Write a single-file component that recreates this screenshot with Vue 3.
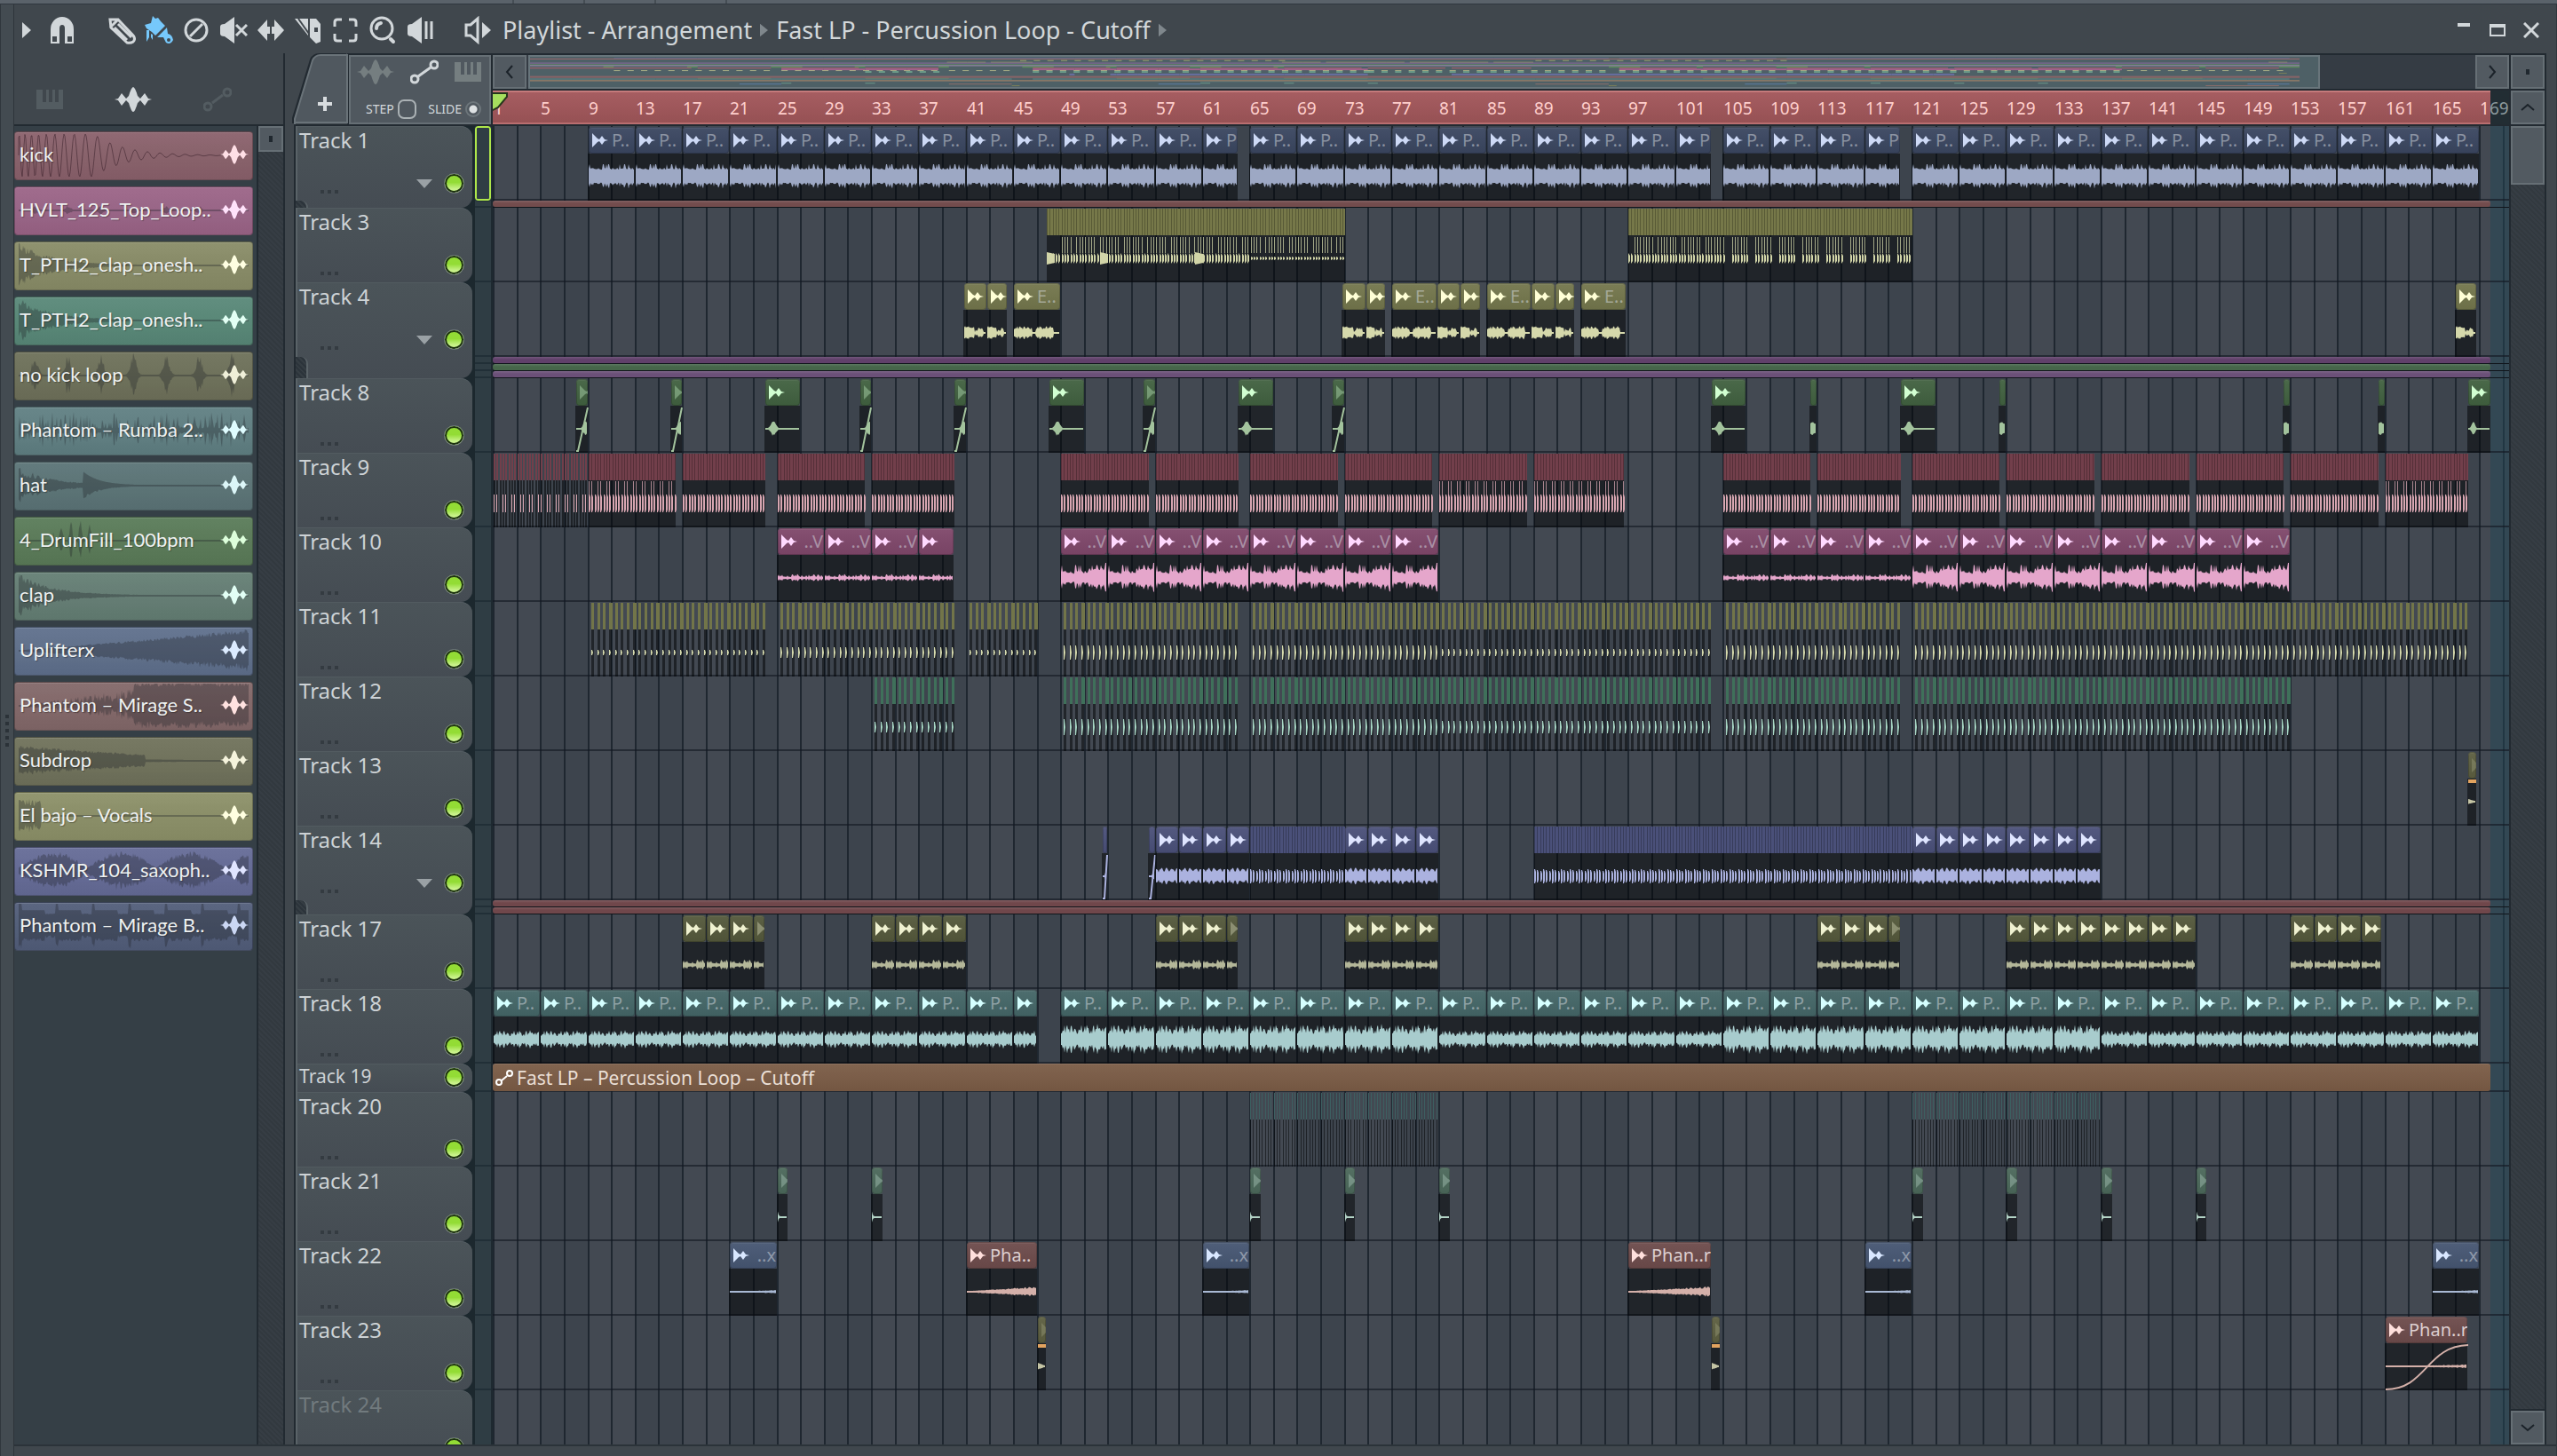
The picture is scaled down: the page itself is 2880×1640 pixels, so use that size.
<script setup>
const BAR = 13.316
const SONG = 2250
const px = (bar) => Math.round((bar - 1) * BAR) + 1

/* ---------- seeded noise and waveform outlines ---------- */
function noise(seed) {
  let a = seed * 2654435761
  return () => {
    a = (a + 0x6d2b79f5) | 0
    let t = Math.imul(a ^ (a >>> 15), 1 | a)
    t = (t + Math.imul(t ^ (t >>> 7), 61 | t)) ^ t
    return ((t ^ (t >>> 14)) >>> 0) / 4294967296
  }
}

const env = {
  drums: (t, r) => (r > 0.84 ? 1 : 0.54 + r * 0.22),
  small: (t, r) => 0.2 + Math.pow(r, 2) * 0.7,
  pulses: (t, r) => 0.4 + 0.4 * Math.abs(Math.cos(t * 12.5)) + r * 0.2,
  groove: (t, r) => 0.3 + 0.1 * Math.abs(Math.sin(t * 9.4)) + r * 0.6,
  swell: (t, r) => (t > 0.97 ? 1 : r > 0.85 ? 0.85 : t > 0.6 ? 0.45 + r * 0.25 : 0.25 + r * 0.3),
  voice: (t, r) => (t > 0.88 ? 0.04 : t > 0.48 && t < 0.54 ? 0.1 : t > 0.54 ? 0.25 + r * 0.5 : 0.6 + r * 0.4),
  voiceB: (t, r) => (t > 0.4 && t < 0.48 ? 0.12 : t > 0.88 ? 0.06 : 0.5 + r * 0.5),
  blob: (t, r) => 0.05 + Math.exp(-Math.pow((t - 0.24) / 0.1, 2)) * (0.8 + r * 0.2),
  tail: (t, r) => 0.06 + Math.exp(-Math.pow((t - 0.9) / 0.3, 2)) * (0.7 + r * 0.3),
  full: (t, r) => 0.7 + r * 0.3,
  rise: (t, r) => 0.12 + t * (0.5 + r * 0.4),
  decay: (t) => 0.06 + Math.exp(-t * 9),
  wedge: (t) => 1 - t * 0.8,
  burst: (t, r) => Math.exp(-t * 7) * (0.6 + 0.4 * r) + 0.02,
  taps: (t, r) => 0.04 + Math.pow(Math.abs(Math.sin(t * 22)), 14) * (0.4 + r * 0.6),
  dense: (t, r) => 0.1 + Math.pow(r, 3) * 0.8,
  twoHits: (t, r) => (t < 0.28 ? Math.exp(-t * 7) * (0.5 + 0.5 * r) : Math.exp(-(t - 0.28) * 14) * 0.7) + 0.02,
  fill: (t, r) => (t > 0.15 && t < 0.32 ? Math.pow(Math.abs(Math.sin(t * 76)), 4) * (0.5 + r * 0.5) : 0.03),
  grow: (t, r) => 0.03 + Math.pow(t, 1.1) * (0.75 + r * 0.25),
  mirage: (t, r) => (t > 0.5 ? 0.8 + r * 0.2 : t * (0.2 + r * 1.3)),
  sub: (t, r) => (t < 0.55 ? (1 - t * 1.1) * 0.65 * (0.75 + 0.25 * r) : 0.08 * (1 - t) + 0.02),
  short: (t, r) => (t < 0.1 ? 0.5 + r * 0.4 : 0.03),
  sax: (t, r) => 0.15 + Math.abs(Math.sin(t * 10.5)) * (0.45 + r * 0.35),
  bass: (t, r) => (t * 6.3 % 1 < 0.08 ? 1 : t * 6.3 % 1 < 0.72 ? 0.68 : 0.5 + r * 0.04)
}

function wave(x0, x1, cy, amp, kind, seed = 3, step = 2) {
  const rnd = noise(seed)
  const top = []
  const low = []
  for (let x = x0; x <= x1; x += step) {
    const t = (x - x0) / Math.max(1, x1 - x0)
    const a = env[kind](t, rnd()) * amp
    top.push(`${x} ${(cy - Math.max(1, a)).toFixed(1)}`)
    low.unshift(`${x} ${(cy + Math.max(1, a * (0.75 + rnd() * 0.25))).toFixed(1)}`)
  }
  return `M${top.join('L')}L${low.join('L')}Z`
}

function kickPath() {
  let phase = 0
  let d = 'M3 25'
  for (let x = 3; x < 262; x++) {
    phase += (2 * Math.PI) / (6 + Math.min(x, 90) * 0.09)
    const a = x < 88 ? 24 : 24 * Math.exp(-(x - 88) / 34)
    d += `L${x} ${(25 - Math.sin(phase) * a).toFixed(1)}`
  }
  return d
}

/* ---------- clip source picker ---------- */
const sources = [
  ['kick', '#8a616b', '#ffdfe6', 'kick'],
  ['HVLT_125_Top_Loop..', '#9b6487', '#ffe2fb', 'taps', 5],
  ['T_PTH2_clap_onesh..', '#898c67', '#ffffe2', 'burst', 26],
  ['T_PTH2_clap_onesh..', '#588878', '#e2fff4', 'burst', 26],
  ['no kick loop', '#6e715a', '#efefd8', 'taps', 25],
  ['Phantom – Rumba 2..', '#608083', '#dffcff', 'dense', 24],
  ['hat', '#5b7477', '#dcf6f8', 'twoHits', 22],
  ['4_DrumFill_100bpm', '#5a7b58', '#ddffdb', 'fill', 24],
  ['clap', '#647e74', '#e2fff5', 'burst', 26],
  ['Uplifterx', '#5f708c', '#dcebff', 'grow', 24],
  ['Phantom – Mirage S..', '#836869', '#ffe2e0', 'mirage', 27],
  ['Subdrop', '#70725b', '#f5f3dc', 'sub', 27],
  ['El bajo – Vocals', '#8c9068', '#ffffe0', 'short', 22],
  ['KSHMR_104_saxoph..', '#656b97', '#e0e4ff', 'sax', 24],
  ['Phantom – Mirage B..', '#525e7a', '#cbd7f4', 'bass', 26]
].map(([name, color, ink, kind, amp], i) => ({
  name, color, ink, kick: kind === 'kick',
  d: kind === 'kick' ? kickPath() : wave(3, 262, 25, amp, kind, i + 2, 1)
}))

/* ---------- arrangement ---------- */
const run = (s, e, len, extra = {}) => {
  const out = []
  for (let b = s; b < e; b += len) out.push({ s: b, e: Math.min(b + len, e), ...extra })
  return out
}
const c = (s, e, extra = {}) => ({ s, e, ...extra })
const brown = { bright: true, head: '#6d4b4b', wave: '#d4b0a9', ink: '#ffdfdc' }

const tracks = [
  { n: 1, head: '#3a4660', ink: '#cdd9f5', wave: '#9da8c4', mini: '#56698c', fold: ['#734c4d'],
    clips: [...run(9, 64, 4), ...run(65, 104, 4), ...run(105, 120, 4), ...run(121, 169, 4)]
      .map((k) => ({ ...k, label: k.e - k.s === 4 ? 'P..' : 'P', kind: 'drums', amp: 14 })) },
  { n: 3, head: '#767849', wave: '#d2d5a8', mini: '#9da06c',
    runs: [{ s: 47.8, e: 73, kind: 'claps' }, { s: 97, e: 121, kind: 'claps', sparse: true }] },
  { n: 4, head: '#73764c', ink: '#ffffd6', wave: '#d5d8ab', mini: '#8f9263', fold: ['#60406a', '#46664a', '#6b5078'],
    clips: [
      c(40.8, 42.75), c(42.75, 44.5), c(45, 49, { label: 'E..' }), c(72.8, 74.8), c(74.8, 76.5),
      c(77, 80.8, { label: 'E..' }), c(80.8, 82.8), c(82.8, 84.5), c(85, 88.8, { label: 'E..' }),
      c(88.8, 90.8), c(90.8, 92.5), c(93, 96.8, { label: 'E..' }), c(167, 168.8)
    ].map((k) => ({ kind: k.label ? 'voiceB' : 'voice', amp: 8, ...k })) },
  { n: 8, head: '#416140', ink: '#d2ffd2', wave: '#a3c39d', mini: '#5b8a5c',
    clips: [
      ...[8, 16, 32, 40, 56, 72].map((s) => c(s, s + 1, { kind: 'tail', amp: 9, fade: true })),
      ...[24, 48, 64, 104, 120].map((s) => c(s, s + 3, { kind: 'blob', amp: 9 })),
      ...[112.4, 128.4, 152.4, 160.4].map((s) => c(s, s + 0.6, { kind: 'full', amp: 8 })),
      c(168, 170, { kind: 'blob', amp: 9 })
    ] },
  { n: 9, head: '#723f4b', wave: '#d8a6b1', mini: '#b5616f',
    runs: [
      { s: 1, e: 9, kind: 'thin' }, { s: 9, e: 16.4, kind: 'tall' }, { s: 17, e: 24 }, { s: 25, e: 32.4 }, { s: 33, e: 40 },
      { s: 49, e: 56.4 }, { s: 57, e: 64 }, { s: 65, e: 72.4 }, { s: 73, e: 80.4 }, { s: 81, e: 88.4, kind: 'tall' }, { s: 89, e: 96.6, kind: 'tall' },
      { s: 105, e: 112.4 }, { s: 113, e: 120 }, { s: 121, e: 128.4 }, { s: 129, e: 136.4 }, { s: 137, e: 144.4 }, { s: 145, e: 152.4 },
      { s: 153, e: 160.4 }, { s: 161, e: 168, kind: 'tall' }
    ].map((r) => ({ kind: 'kick', ...r })) },
  { n: 10, head: '#7f476a', ink: '#ffd9ff', wave: '#e5a6cb', mini: '#a3618c',
    clips: [
      ...run(25, 40, 4, { kind: 'small', amp: 5 }), ...run(49, 81, 4, { kind: 'swell', amp: 17 }),
      ...run(105, 121, 4, { kind: 'small', amp: 5 }), ...run(121, 153, 4, { kind: 'swell', amp: 17 })
    ].map((k) => ({ ...k, label: k.e - k.s === 4 ? '..V' : '', end: true })) },
  { n: 11, head: '#727549', wave: '#d7dbae', mini: '#b0b588',
    runs: [
      { s: 9, e: 24, a: 3 }, { s: 25, e: 40, a: 6 }, { s: 41, e: 47, a: 3 }, { s: 49, e: 64, a: 8 }, { s: 65, e: 81, a: 8 },
      { s: 81, e: 104, a: 4 }, { s: 105, e: 120, a: 8 }, { s: 121, e: 168, a: 8 }
    ].map((r) => ({ kind: 'hits', ...r })) },
  { n: 12, head: '#3f705a', wave: '#a9d8c6', mini: '#6c9c8a',
    runs: [
      { s: 33, e: 40, a: 6 }, { s: 49, e: 64, a: 9 }, { s: 65, e: 81, a: 9 }, { s: 81, e: 104, a: 7 },
      { s: 105, e: 120, a: 9 }, { s: 121, e: 153, a: 9 }
    ].map((r) => ({ kind: 'hits', ...r })) },
  { n: 13, head: '#5c5e40', ink: '#a5a884', wave: '#c4c4a4', mini: '#7d8058', clips: [c(168, 168.75, { kind: 'wedge', amp: 3, spark: true })] },
  { n: 14, head: '#4a5079', ink: '#dfe5ff', wave: '#abb2df', mini: '#676fa3', fold: ['#70474b', '#70474b'],
    clips: [
      c(52.5, 53, { kind: 'tail', amp: 5, fade: true }), c(56.4, 57, { kind: 'tail', amp: 5, fade: true }),
      ...run(57, 65, 2), ...run(73, 81, 2), ...run(121, 137, 2)
    ].map((k) => ({ kind: 'pulses', amp: 10, ...k })),
    runs: [{ s: 65, e: 73, kind: 'pulse' }, { s: 89, e: 121, kind: 'pulse' }] },
  { n: 17, head: '#54583b', ink: '#eff1d0', wave: '#b4b799', mini: '#7b8050',
    clips: [
      ...run(17, 24, 2), ...run(33, 41, 2), ...run(57, 64, 2), ...run(73, 81, 2), ...run(113, 120, 2),
      ...run(129, 145, 2), ...run(153, 160.7, 2)
    ].map((k) => ({ ...k, kind: 'small', amp: 7 })) },
  { n: 18, head: '#446667', ink: '#d5ffff', wave: '#a8cccd', mini: '#5f8a8c',
    clips: [...run(1, 47, 4), ...run(49, 169, 4)].map((k) => {
      const loud = (k.s >= 49 && k.s < 81) || (k.s >= 105 && k.s < 137)
      return { ...k, label: k.e - k.s === 4 ? 'P..' : '', kind: 'groove', amp: loud ? 18 : 11 }
    }) },
  { n: 19, head: '#7b5c46', auto: 'Fast LP – Percussion Loop – Cutoff' },
  { n: 20, head: '#3d5f61', wave: '#3d5f61', mini: '#527578', runs: [{ s: 65, e: 81, kind: 'ticks' }, { s: 121, e: 137, kind: 'ticks' }] },
  { n: 21, head: '#4b685a', ink: '#c0ddd0', wave: '#b3d3c6', mini: '#6c9c8a',
    clips: [25, 33, 65, 73, 81, 121, 129, 137, 145].map((s) => c(s, s + 0.95, { kind: 'decay', amp: 6 })) },
  { n: 22, head: '#465672', ink: '#d9e7ff', wave: '#a9b9d4', mini: '#5d7fa6',
    clips: [
      ...[21, 61, 117, 165].map((s) => c(s, s + 4, { kind: 'rise', amp: 2, label: '..x', end: true })),
      c(41, 47, { kind: 'rise', amp: 6, label: 'Pha..', ...brown }),
      c(97, 104, { kind: 'rise', amp: 6, label: 'Phan..r', ...brown })
    ] },
  { n: 23, head: '#5c5e40', ink: '#a5a884', wave: '#c4c4a4', mini: '#7d8058',
    clips: [
      c(47, 47.75, { kind: 'wedge', amp: 4, spark: true }), c(104, 104.75, { kind: 'wedge', amp: 4, spark: true }),
      c(161, 168, { kind: 'rise', amp: 2, label: 'Phan..r', curve: true, ...brown })
    ] },
  { n: 24, dim: true }
]

const CY = 57
for (const t of tracks) {
  t.clips = (t.clips || []).map((k) => {
    const x = px(k.s)
    const w = px(k.e) - x
    return { ...k, x, w, d: wave(x, x + w - 2, CY, k.amp, k.kind, 11 + k.kind.length, 1) }
  })
  t.shapes = (t.runs || []).map((r) => {
    const x0 = px(r.s)
    const x1 = px(r.e)
    const o = { x: x0, w: x1 - x0, head: '', body: '', wave: '', shade: '', whisk: '', solid: r.kind !== 'thin' && r.kind !== 'hits' && r.kind !== 'ticks' }
    const pitch = r.kind === 'hits' ? BAR / 2 : BAR / 4
    const off = r.kind === 'hits' ? 3 : 0
    let i = 0
    for (let p = x0 + off; p < x1 - 1; p += pitch, i++) {
      const x = Math.round(p)
      if (r.kind === 'hits') {
        const w = i % 4 === 3 ? 4 : 3
        o.head += `M${x} 1h${w}v30h${-w}z`
        o.body += `M${x} 31h3v53h-3z`
        o.wave += `M${x} ${CY - r.a}h1l1 ${r.a}l-1 ${r.a}h-1z`
      } else if (r.kind === 'ticks') {
        o.head += `M${x} 1h1v30h-1z`
        o.body += `M${x} 31h1v53h-1z`
      } else if (r.kind === 'thin') {
        o.head += `M${x} 1h2v30h-2z`
        o.body += `M${x} 31h2v53h-2z`
        if (i % 3 !== 2) o.wave += `M${x} 47h1v20h-1z`
      } else if (r.kind === 'claps') {
        o.shade += `M${x} 1h1v30h-1z`
        const local = (p - x0) / BAR
        const gap = r.sparse && local > 8 ? local % 2 < 0.5 : false
        const a = !r.sparse && local > 17 ? 2 : 6
        if (!gap) {
          o.wave += `M${x} ${CY - a}l2 ${a / 2}v${a}l-2 ${a / 2}z`
          if (local % 2 > 0.3 && (local > 1 || r.sparse)) o.whisk += `M${x} 33h1v18h-1z`
        }
      } else {
        o.shade += `M${x} 1h1v30h-1z`
        const a = r.kind === 'pulse' ? 8 - (i % 3) : 10
        o.wave += `M${x} ${CY - a}h1l1 3v${2 * a - 6}l-1 3h-1z`
        if (r.kind === 'tall' && i % 3 !== 2) o.whisk += `M${x} 32h1v20h-1z`
      }
    }
    if (r.kind === 'claps' && !r.sparse) {
      for (const b of [47.8, 52.3, 60.3]) {
        const x = px(b)
        o.wave += `M${x} ${CY - 7}l9 2v10l-9 2z`
      }
    }
    return o
  })
}

const laneH = (t) => (t.auto ? 32 : 84)
const rowH = (t) => laneH(t) + (t.fold ? t.fold.length * 8 : 0)

const gridLines = Array.from({ length: 87 }, (_, i) => px(1 + i * 2))
const shades = Array.from({ length: 22 }, (_, i) => ({ x: px(1 + i * 8), w: px(5) - 1 }))
const labels = Array.from({ length: 43 }, (_, i) => {
  const n = 1 + i * 4
  return { n, w: px(n + 4) - px(n) }
})

/* ---------- overview ---------- */
const overview = []
{
  const rows = { 1: [1, 1], 3: [4, 1], 4: [6, 1], 8: [11, 2], 9: [13, 1], 10: [14, 2], 11: [16, 1], 12: [17, 2], 13: [19, 1], 14: [20, 2], 17: [25, 1], 18: [26, 1], 20: [29, 1], 21: [31, 1], 22: [32, 1], 23: [34, 1] }
  for (const t of tracks) {
    const r = rows[t.n]
    if (!r) continue
    for (const k of t.clips) overview.push({ x: k.s - 1, w: k.e - k.s, y: r[0], h: r[1], f: k.curve || k.bright ? '#8f6f6c' : t.mini })
    for (const k of t.runs || []) {
      const dash = t.n === 11 || t.n === 12 || t.n === 3
      if (dash) for (let b = k.s; b < k.e; b += 1.3) overview.push({ x: b - 1, w: 0.6, y: r[0], h: r[1], f: t.mini })
      else overview.push({ x: k.s - 1, w: k.e - k.s, y: r[0], h: r[1], f: t.mini })
    }
  }
  for (const [y, f] of [[2, '#a0686b'], [7, '#8c6ba0'], [9, '#5e8c5e'], [10, '#a58ab8'], [23, '#a0686b'], [24, '#8f6468'], [28, '#b58a68']]) {
    overview.push({ x: 0, w: 169, y, h: 1, f })
  }
}
</script>

<template>
  <div class="app">
    <div class="topstrip"><i></i><i></i><i></i><i></i></div>
    <div class="window">
      <div class="gutter"><i v-for="n in 5" :key="n"></i></div>
      <div class="content">
        <header class="toolbar">
          <button class="tool caret" aria-label="Menu"><svg viewBox="0 0 10 18"><path d="M0 0L10 9L0 18z" /></svg></button>
          <button class="tool magnet" aria-label="Snap">
            <svg viewBox="0 0 32 32"><path fill-rule="evenodd" d="M3 31V15a13 14 0 0 1 26 0v16h-10V14a3 4 0 0 0-6 0v17zM5 23v6h5v-6zM22 23v6h5v-6z" /></svg>
          </button>
          <button class="tool" aria-label="Draw">
            <svg viewBox="0 0 32 32" class="line"><path d="M3 4H12L29 22Q32 26 29 29Q26 31 22 30L4 13zM3 13L12 4M8 13L22 27M12 9L27 24" /></svg>
          </button>
          <button class="tool blue" aria-label="Paint">
            <svg viewBox="0 0 32 32"><path d="M9 0L12 3L15 2L18 6L23 11L12 22L8 18L2 14L0 10L7 8zM2 16h3v8l-3 5zM7 20l2 1v6l-2-3z" /><path d="M14 24L25 13L26 20Q31 21 32 27Q29 33 24 30L21 24z" /><circle cx="27" cy="27" r="2" fill="#40474d" /></svg>
          </button>
          <button class="tool" aria-label="Delete"><svg viewBox="0 0 32 32" class="line"><circle cx="16" cy="16" r="12" /><path d="M9 23L23 9" /></svg></button>
          <button class="tool" aria-label="Mute"><svg viewBox="0 0 32 32"><path d="M1 12Q1 9 6 9L17 1v30L6 23Q1 23 1 20z" /><path d="M19 10L31 22M31 10L19 22" class="stroke" /></svg></button>
          <button class="tool" aria-label="Slip"><svg viewBox="0 0 32 32"><path d="M1 16L12 4v8h3v8h-3v8zM31 16L20 4v8h-3v8h3v8z" /></svg></button>
          <button class="tool" aria-label="Slice"><svg viewBox="0 0 32 32"><path fill-rule="evenodd" d="M1 3h15v19zM18 3h7l5 6v20l-5 2-7-7zM23 13v5h4v-5z" /><path d="M5 3L17 20" stroke="#40474d" stroke-width="2" /></svg></button>
          <button class="tool" aria-label="Select"><svg viewBox="0 0 32 32" class="line"><path d="M4 12V7Q4 4 7 4H12M20 4h5Q28 4 28 7v5M28 20v5Q28 28 25 28h-5M12 28H7Q4 28 4 25V20" /></svg></button>
          <button class="tool" aria-label="Zoom"><svg viewBox="0 0 32 32" class="line"><circle cx="15" cy="14" r="12" /><path d="M9 14Q9 9 14 8" class="stroke wide" /><path d="M25 26L28 29" class="stroke wide" /></svg></button>
          <button class="tool" aria-label="Preview"><svg viewBox="0 0 32 32"><path d="M2 12Q2 9 7 9L18 1v30L7 23Q2 23 2 20z" /><path d="M23 6v20M29 6v20" class="stroke" /></svg></button>
          <button class="tool speaker" aria-label="Playlist options"><svg viewBox="0 0 32 32"><path d="M3 10h5L16 3v26L8 22H3z" class="hollow" /><path d="M21 7L31 16L21 25z" /></svg></button>
          <nav class="crumbs">
            <a href="#playlist">Playlist - Arrangement</a>
            <svg viewBox="0 0 10 16"><path d="M0 0L10 8L0 16z" /></svg>
            <a href="#clip">Fast LP - Percussion Loop - Cutoff</a>
            <svg viewBox="0 0 10 16"><path d="M0 0L10 8L0 16z" /></svg>
          </nav>
          <div class="winbtns">
            <button aria-label="Minimize"><svg viewBox="0 0 18 18"><path d="M2 1h14v4H2z" /></svg></button>
            <button aria-label="Maximize"><svg viewBox="0 0 18 18"><path fill-rule="evenodd" d="M0 2h18v14H0zM2 6v8h14V6z" /></svg></button>
            <button aria-label="Close"><svg viewBox="0 0 18 18"><path d="M1 1L17 17M17 1L1 17" class="stroke" /></svg></button>
          </div>
        </header>

        <div class="main">
          <aside class="picker">
            <div class="filters">
              <button class="off" aria-label="Patterns"><svg viewBox="0 0 30 22"><path d="M0 0h7v14h4V0h3v14h4V0h3v14h4V0h5v22H0z" /></svg></button>
              <button aria-label="Audio clips"><svg viewBox="0 0 42 28"><path d="M0 14L4 13L8 7L13 13L16 10Q19 0 21 0Q23 0 26 10L29 13L34 7L38 13L42 14L38 15L34 21L29 15L26 18Q23 28 21 28Q19 28 16 18L13 15L8 21L4 15z" /></svg></button>
              <button class="off" aria-label="Automation"><svg viewBox="0 0 32 28" class="line"><circle cx="5" cy="22" r="4" /><circle cx="27" cy="6" r="4" /><path d="M10 18L22 9" /></svg></button>
            </div>
            <div class="sources">
              <div class="list">
                <button v-for="(s, i) in sources" :key="i" class="source" :style="{ backgroundColor: s.color }">
                  <svg class="shape" :class="{ trace: s.kick }" viewBox="0 0 265 50" preserveAspectRatio="none"><path :d="s.d" /></svg>
                  <span>{{ s.name }}</span>
                  <svg class="mark" viewBox="0 0 42 28"><path :fill="s.ink" d="M0 14L4 13L8 7L13 13L16 10Q19 0 21 0Q23 0 26 10L29 13L34 7L38 13L42 14L38 15L34 21L29 15L26 18Q23 28 21 28Q19 28 16 18L13 15L8 21L4 15z" /></svg>
                </button>
              </div>
              <div class="pscroll"><button aria-label="Scroll"><i></i></button></div>
            </div>
          </aside>

          <section class="arrangement">
            <div class="top">
              <div class="tabs">
                <button class="add" aria-label="Add track">
                  <svg viewBox="0 0 62 80"><path d="M1 80V74L21 8Q24 2 30 2H60V78H2" /><path class="plus" d="M27 55h6v-6h4v6h6v4h-6v6h-4v-6h-6z" /></svg>
                </button>
                <div class="modes">
                  <div class="modeicons">
                    <svg viewBox="0 0 42 28" class="dimicon wide42"><path d="M0 14L4 13L8 7L13 13L16 10Q19 0 21 0Q23 0 26 10L29 13L34 7L38 13L42 14L38 15L34 21L29 15L26 18Q23 28 21 28Q19 28 16 18L13 15L8 21L4 15z" /></svg>
                    <svg viewBox="0 0 32 28" class="line wide32"><circle cx="5" cy="22" r="4" /><circle cx="27" cy="6" r="4" /><path d="M9 19L23 9" /></svg>
                    <svg viewBox="0 0 30 22" class="dimicon wide30"><path d="M0 0h7v14h4V0h3v14h4V0h3v14h4V0h5v22H0z" /></svg>
                  </div>
                  <div class="switches">
                    <label>STEP<input type="checkbox" /></label>
                    <label>SLIDE<input type="radio" checked /></label>
                  </div>
                </div>
              </div>
              <div class="rulers">
                <div class="mini">
                  <button class="arrow" aria-label="Scroll left"><svg viewBox="0 0 12 18"><path d="M9 2L3 9L9 16" /></svg></button>
                  <div class="track">
                    <div class="view">
                      <svg viewBox="0 0 169 36" preserveAspectRatio="none">
                        <rect v-for="(r, i) in overview" :key="i" :x="r.x" :y="r.y" :width="r.w" :height="r.h" :fill="r.f" />
                      </svg>
                    </div>
                  </div>
                  <button class="arrow" aria-label="Scroll right"><svg viewBox="0 0 12 18"><path d="M3 2L9 9L3 16" /></svg></button>
                </div>
                <div class="ruler">
                  <div class="red" :style="{ width: SONG + 'px' }"></div>
                  <div class="numbers">
                    <span v-for="l in labels" :key="l.n" :style="{ width: l.w + 'px' }"><template v-if="l.n === 169">1<i>69</i></template><template v-else>{{ l.n }}</template></span>
                  </div>
                  <svg class="marker" viewBox="0 0 18 22"><path d="M-2 1H16V5L6 17L-2 21z" /></svg>
                </div>
              </div>
            </div>

            <div class="body">
              <div class="heads">
                <div v-for="t in tracks" :key="t.n" class="headrow" :class="{ slim: t.auto, dim: t.dim }" :style="{ height: rowH(t) + 'px' }">
                  <span class="name">Track {{ t.n }}</span>
                  <span v-if="!t.auto && !t.dim" class="dots"><i></i><i></i><i></i></span>
                  <svg v-if="t.fold" class="tri" viewBox="0 0 18 10"><path d="M0 0H18L9 10z" /></svg>
                  <button class="led" :aria-label="'Mute track ' + t.n"></button>
                  <span v-if="t.fold" class="notch" :style="{ height: t.fold.length * 8 + 'px' }"></span>
                </div>
              </div>
              <div class="strip">
                <template v-for="t in tracks" :key="t.n">
                  <div class="cell" :class="{ sel: t.n === 1 }" :style="{ height: laneH(t) + 'px' }"></div>
                  <div v-for="(f, i) in t.fold || []" :key="i" class="cell thin"></div>
                </template>
              </div>
              <div class="timeline">
                <svg class="grid" width="2400" height="1500">
                  <rect v-for="(s, i) in shades" :key="'s' + i" :x="s.x" y="0" :width="s.w" height="1500" fill="#434952" />
                  <rect v-for="g in gridLines" :key="g" :x="g - 1" y="0" width="2" height="1500" fill="#1f2730" />
                </svg>
                <div class="beyond" :style="{ left: SONG + 'px' }"></div>
                <template v-for="t in tracks" :key="t.n">
                  <div class="lane" :style="{ height: laneH(t) + 'px' }">
                    <div v-if="t.auto" class="autoclip" :style="{ width: SONG + 'px', backgroundColor: t.head }">
                      <svg viewBox="0 0 22 20"><circle cx="5" cy="15" r="3" /><circle cx="17" cy="5" r="3" /><path d="M8 13L14 8" /></svg>
                      <span>{{ t.auto }}</span>
                    </div>
                    <svg v-else class="shapes" width="2260" height="84">
                      <g v-for="(r, i) in t.shapes" :key="'r' + i">
                        <rect v-if="r.solid" :x="r.x" y="31" :width="r.w" height="53" class="dark" />
                        <rect v-if="r.solid" :x="r.x" y="1" :width="r.w" height="30" :fill="t.head" />
                        <path :d="r.shade" fill="#000" opacity="0.25" />
                        <path :d="r.body" class="dark" />
                        <path :d="r.head" :fill="t.head" />
                        <path :d="r.whisk" :fill="t.wave" opacity="0.75" />
                        <path :d="r.wave" :fill="t.wave" />
                      </g>
                      <g v-for="(k, i) in t.clips" :key="'c' + i">
                        <rect :x="k.x - 1" y="31" :width="k.w" height="53" class="dark" />
                        <path :d="k.d" :fill="k.wave || t.wave" />
                        <path v-if="k.fade" :d="`M${k.x} 82h2L${k.x + k.w - 1} 33`" fill="none" :stroke="t.wave" stroke-width="2" />
                        <path v-if="k.curve" :d="`M${k.x} 83C${k.x + 46} 83 ${k.x + 46} 34 ${k.x + k.w} 33`" fill="none" :stroke="k.wave" stroke-width="2" />
                        <rect v-if="k.spark" :x="k.x" y="32" width="9" height="4" fill="#e2a35f" />
                      </g>
                    </svg>
                    <div v-for="(k, i) in t.clips" :key="'h' + i" class="clip" :class="{ faint: k.w < 18, end: k.end, bright: k.bright }"
                      :style="{ left: k.x + 'px', width: k.w - 1 + 'px', backgroundColor: k.head || t.head }">
                      <svg v-if="k.w > 9" viewBox="0 0 18 16"><path :fill="k.ink || t.ink" d="M0 0L6 6L8 7L11 3L14 7L18 8L14 9L11 13L8 9L6 10L0 16z" /></svg>
                      <span v-if="k.label">{{ k.label }}</span>
                    </div>
                  </div>
                  <div v-for="(f, i) in t.fold || []" :key="t.n + '-' + i" class="foldbar">
                    <div :style="{ width: SONG + 'px', backgroundColor: f }"></div>
                  </div>
                </template>
              </div>
            </div>
          </section>

          <div class="vscroll">
            <button class="sq corner" aria-label="Zoom"><i></i></button>
            <button class="sq" aria-label="Scroll up"><svg viewBox="0 0 18 12"><path d="M2 9L9 3L16 9" /></svg></button>
            <div class="rail"><div class="thumb"></div></div>
            <button class="sq" aria-label="Scroll down"><svg viewBox="0 0 18 12"><path d="M2 3L9 9L16 3" /></svg></button>
          </div>
        </div>
        <footer class="foot"></footer>
      </div>
    </div>
  </div>
</template>

<style>
body {
  margin: 0;
  background: #40474d;
}
</style>

<style scoped>
* {
  box-sizing: border-box;
}
.app {
  height: 100vh;
  display: flex;
  flex-direction: column;
  overflow: hidden;
  background: #40474d;
  color: #d2d7da;
  font-family: "Noto Sans", "Open Sans", sans-serif;
}
button {
  padding: 0;
  border: 0;
  background: none;
  color: inherit;
  font: inherit;
}
svg {
  display: block;
  fill: currentColor;
}
.topstrip {
  display: flex;
  flex: none;
  height: 5px;
  padding-left: 577px;
  gap: 78px;
  background: #5a626a;
  border-bottom: 1px solid #30373e;
}
.topstrip i {
  width: 2px;
  background: #454d54;
}
.window {
  display: flex;
  flex: 1;
  min-height: 0;
}
.gutter {
  flex: none;
  width: 16px;
  display: flex;
  flex-direction: column;
  align-items: center;
  justify-content: center;
  gap: 4px;
  background: #434b51;
  border-left: 1px solid #30373d;
  border-right: 1px solid #2e353b;
}
.gutter i {
  width: 4px;
  height: 4px;
  background: #2b3238;
}
.content {
  display: flex;
  flex-direction: column;
  flex: 1;
  min-width: 0;
  border-right: 1px solid #30373d;
}

/* toolbar */
.toolbar {
  display: flex;
  align-items: center;
  flex: none;
  height: 55px;
  padding: 2px 19px 0 8px;
}
.tool {
  display: flex;
  justify-content: center;
  width: 42px;
  flex: none;
}
.tool svg {
  width: 32px;
  height: 32px;
}
.caret {
  width: 12px;
}
.caret svg {
  width: 10px;
  height: 18px;
}
.magnet {
  width: 68px;
  margin-right: 12px;
}
.speaker {
  margin-left: 23px;
}
.blue {
  color: #76c8fb;
}
.line,
.line .stroke,
.stroke,
.hollow {
  fill: none;
  stroke: currentColor;
  stroke-width: 3;
}
.line .wide {
  stroke-width: 4;
  stroke-linecap: round;
}
.crumbs {
  display: flex;
  align-items: center;
  gap: 9px;
  margin-left: 7px;
  font-size: 27px;
  line-height: 32px;
}
.crumbs a {
  color: #d2d7da;
  text-decoration: none;
}
.crumbs svg {
  width: 9px;
  height: 16px;
  color: #7f878c;
}
.winbtns {
  display: flex;
  gap: 20px;
  margin-left: auto;
}
.winbtns svg {
  width: 18px;
  height: 18px;
}

/* clip source picker */
.main {
  display: flex;
  flex: 1;
  min-height: 0;
}
.picker {
  display: flex;
  flex-direction: column;
  flex: none;
  width: 305px;
  border-right: 2px solid #222a31;
}
.filters {
  display: flex;
  align-items: center;
  flex: none;
  height: 80px;
  padding: 24px 58px 0 25px;
  justify-content: space-between;
}
.filters svg {
  width: 42px;
  height: 28px;
}
.filters .off {
  color: #535c61;
}
.filters .off:first-child svg {
  width: 30px;
  height: 22px;
}
.filters .off:last-child svg {
  width: 32px;
}
.sources {
  display: flex;
  flex: 1;
  min-height: 0;
  border-top: 2px solid #222a31;
}
.list {
  display: flex;
  flex-direction: column;
  flex: 1;
  gap: 7px;
  padding: 6px 4px 0 0;
  background: #353f46;
}
.source {
  position: relative;
  display: flex;
  align-items: center;
  flex: none;
  height: 55px;
  padding: 0 4px 3px 5px;
  border: 1px solid rgba(0, 0, 0, 0.25);
  border-radius: 4px;
  background-image: linear-gradient(rgba(255, 255, 255, 0.05), rgba(0, 0, 0, 0.06));
  box-shadow: inset 0 1px rgba(255, 255, 255, 0.12);
  text-align: left;
}
.source span {
  position: relative;
  flex: 1;
  color: #eef1f1;
  font-family: Lato, "Noto Sans", sans-serif;
  font-size: 22px;
  line-height: 28px;
  white-space: nowrap;
  text-shadow: 1px 1px 1px rgba(0, 0, 0, 0.3);
}
.source .shape {
  position: absolute;
  inset: 1px 1px;
  width: 265px;
  height: 50px;
  fill: rgba(30, 32, 38, 0.33);
}
.source .trace {
  fill: none;
  stroke: rgba(50, 25, 35, 0.5);
  stroke-width: 1;
}
.source .mark {
  position: relative;
  flex: none;
  width: 32px;
  height: 24px;
}
.pscroll,
.rail {
  background: #363d44 repeating-linear-gradient(45deg, #363d44 0 2px, #32393f 2px 4px);
}
.pscroll {
  width: 30px;
  border-left: 2px solid #222a31;
}
.pscroll button {
  display: flex;
  align-items: center;
  justify-content: center;
  width: 28px;
  height: 29px;
  background: #525a61;
  border: 2px solid #666f75;
}
.pscroll i,
.corner i {
  width: 4px;
  height: 7px;
  background: #20282f;
}

/* arrangement header */
.arrangement {
  display: flex;
  flex-direction: column;
  flex: 1;
  min-width: 0;
  margin-left: 10px;
  border-left: 2px solid #222a31;
}
.top {
  display: flex;
  flex: none;
  height: 82px;
  border-bottom: 2px solid #222a31;
}
.tabs {
  display: flex;
  flex: none;
  width: 224px;
  margin-left: -2px;
  background: #40474d;
}
.add svg {
  width: 62px;
  height: 80px;
  fill: #50585f;
  stroke: #6a7379;
  stroke-width: 2;
  filter: drop-shadow(-2px -1px #222a31);
}
.add .plus {
  fill: #d8dcdf;
  stroke: none;
}
.modes {
  display: flex;
  flex-direction: column;
  justify-content: space-between;
  flex: 1;
  margin: 2px 2px 0 0;
  padding: 3px 9px 4px 7px;
  background: #50585f;
  border: 2px solid #666f75;
  outline: 2px solid #222a31;
}
.modeicons,
.switches {
  display: flex;
  align-items: center;
  justify-content: space-between;
}
.dimicon {
  color: #757e80;
}
.wide42 {
  width: 42px;
  height: 28px;
}
.wide32 {
  width: 32px;
  height: 28px;
}
.wide30 {
  width: 30px;
  height: 22px;
}
.switches {
  padding-left: 10px;
}
.switches label {
  display: flex;
  align-items: center;
  gap: 4px;
  font-size: 14px;
  line-height: 22px;
}
.switches input {
  appearance: none;
  width: 21px;
  height: 22px;
  margin: 0;
  border: 2px solid #aab1b4;
  border-radius: 7px;
}
.switches input[type="radio"] {
  width: 18px;
  height: 18px;
  border-color: #6d767b;
  border-radius: 50%;
  background: radial-gradient(#dde1e3 0 4px, transparent 5px);
}
.rulers {
  display: flex;
  flex-direction: column;
  flex: 1;
  min-width: 0;
}
.mini {
  display: flex;
  flex: none;
  height: 42px;
  padding: 2px 0;
  background: #222a31;
}
.arrow {
  display: flex;
  align-items: center;
  justify-content: center;
  flex: none;
  width: 38px;
  background: #525a61;
  border: 2px solid #666f75;
}
.arrow svg {
  width: 12px;
  height: 18px;
}
.arrow svg,
.sq svg {
  fill: none;
  stroke: #1b2229;
  stroke-width: 2;
}
.mini .track {
  flex: 1;
  padding-left: 2px;
  background: #353c44;
}
.view {
  width: 92%;
  height: 38px;
  background: #4e6066;
  border: 2px solid #68757b;
}
.view svg {
  width: 99%;
  height: 34px;
}
.ruler {
  position: relative;
  flex: 1;
  overflow: hidden;
  background: #222d33;
}
.red {
  height: 38px;
  border-top: 2px solid #c47a7b;
  border-bottom: 2px solid #b96e70;
  background: linear-gradient(#a65d61, #965154);
}
.numbers {
  position: absolute;
  inset: 0;
  display: flex;
  padding-left: 1px;
  color: #ffcfcc;
  font-size: 19px;
  line-height: 40px;
}
.numbers span {
  flex: none;
}
.numbers i {
  color: #8c9a9d;
  font-style: normal;
}
.marker {
  position: absolute;
  left: 0;
  top: 2px;
  width: 18px;
  height: 22px;
  fill: #a6df5e;
  stroke: #26361c;
  stroke-width: 2;
}

/* track headers */
.body {
  display: flex;
  flex: 1;
  min-height: 0;
  overflow: hidden;
}
.heads {
  flex: none;
  width: 202px;
  background: #1c282e;
  overflow: hidden;
}
.headrow {
  position: relative;
  display: flex;
  flex-wrap: wrap;
  width: 199px;
  padding: 0 10px 0 2px;
  background: linear-gradient(#4b5459, #454c53);
  border-left: 2px solid #5a6368;
  border-radius: 0 13px 13px 0;
  box-shadow: inset 0 1px #525b60;
}
.name {
  flex: none;
  width: 100%;
  height: 32px;
  color: #cdd2d5;
  font-size: 24px;
  line-height: 31px;
}
.dim .name {
  color: #717a7e;
}
.dots {
  position: absolute;
  left: 26px;
  top: 72px;
  display: flex;
  gap: 4px;
}
.dots i {
  width: 4px;
  height: 4px;
  background: #343b41;
}
.tri {
  position: absolute;
  right: 45px;
  top: 60px;
  width: 18px;
  height: 10px;
  color: #9aa1a5;
}
.led {
  position: absolute;
  right: 9px;
  top: 53px;
  width: 23px;
  height: 23px;
  border: 1px solid #737c80;
  border-radius: 50%;
  background: linear-gradient(#93dc35 45%, #c9f28a 80%);
  box-shadow: inset 0 0 0 2px #1d3210;
}
.slim .name {
  width: auto;
  font-size: 21px;
  line-height: 29px;
}
.slim .led {
  top: 4px;
}
.notch {
  position: absolute;
  left: -2px;
  bottom: 0;
  width: 14px;
  border-right: 2px solid #5a6368;
  border-top-right-radius: 8px;
  background: repeating-linear-gradient(45deg, #2c343b 0 2px, #353d43 2px 4px);
}
.strip {
  flex: none;
  width: 20px;
  background: #2f3d44;
  border-right: 2px solid #1e2930;
}
.cell {
  border-bottom: 2px solid #212f37;
}
.cell.thin {
  height: 8px;
}
.cell.sel {
  border: 2px solid #aee64a;
  border-radius: 3px;
  outline: 1px solid #212f37;
}

/* timeline */
.timeline {
  position: relative;
  flex: 1;
  min-width: 0;
  overflow: hidden;
  background: #3d444d;
}
.grid {
  position: absolute;
  left: 0;
  top: 0;
}
.beyond {
  position: absolute;
  top: 0;
  bottom: 0;
  right: 0;
  background: rgba(35, 72, 85, 0.5);
}
.lane {
  position: relative;
  box-shadow: inset 0 -2px rgba(18, 24, 34, 0.6);
}
.shapes {
  overflow: visible;
}
.dark {
  fill: rgba(2, 4, 6, 0.52);
}
.clip {
  position: absolute;
  top: 1px;
  display: flex;
  align-items: center;
  height: 30px;
  padding: 0 1px 0 4px;
  overflow: hidden;
  border-radius: 4px;
  background-image: linear-gradient(rgba(255, 255, 255, 0.05), rgba(0, 0, 0, 0.06));
  box-shadow: inset 0 0 0 1px rgba(0, 0, 0, 0.18), inset 0 2px rgba(255, 255, 255, 0.06);
  color: rgba(215, 220, 225, 0.5);
  font-size: 20px;
  line-height: 28px;
  white-space: nowrap;
}
.clip.bright {
  color: #ddcfd0;
}
.clip svg {
  flex: none;
  width: 18px;
  height: 16px;
  margin-right: 4px;
}
.clip.end span {
  margin-left: auto;
}
.clip.faint svg {
  opacity: 0.35;
}
.autoclip {
  display: flex;
  align-items: center;
  gap: 3px;
  height: 31px;
  padding-left: 2px;
  border-radius: 3px;
  background-image: linear-gradient(rgba(255, 255, 255, 0.05), rgba(0, 0, 0, 0.06));
  box-shadow: inset 0 1px rgba(255, 255, 255, 0.1);
  color: #eadfd6;
  font-size: 21px;
  line-height: 28px;
}
.autoclip svg {
  width: 22px;
  height: 20px;
  fill: none;
  stroke: #fff;
  stroke-width: 2;
}
.foldbar {
  position: relative;
  height: 8px;
  border-bottom: 1px solid #10151b;
}
.foldbar div {
  height: 7px;
  border-radius: 3px;
  background-image: linear-gradient(rgba(255, 255, 255, 0.12), transparent 3px);
}

/* vertical scrollbar */
.vscroll {
  display: flex;
  flex-direction: column;
  flex: none;
  width: 42px;
  margin-right: 11px;
  gap: 2px;
  padding: 2px 2px 0;
  background: #222a31;
}
.sq {
  display: flex;
  align-items: center;
  justify-content: center;
  flex: none;
  width: 38px;
  height: 38px;
  background: #525a61;
  border: 2px solid #666f75;
}
.sq svg {
  width: 18px;
  height: 12px;
}
.corner i {
  height: 6px;
}
.rail {
  flex: 1;
}
.thumb {
  height: 66px;
  background: #525a61;
  border: 2px solid #666f75;
}
.foot {
  flex: none;
  height: 13px;
  border-top: 2px solid #2b3339;
}
</style>
